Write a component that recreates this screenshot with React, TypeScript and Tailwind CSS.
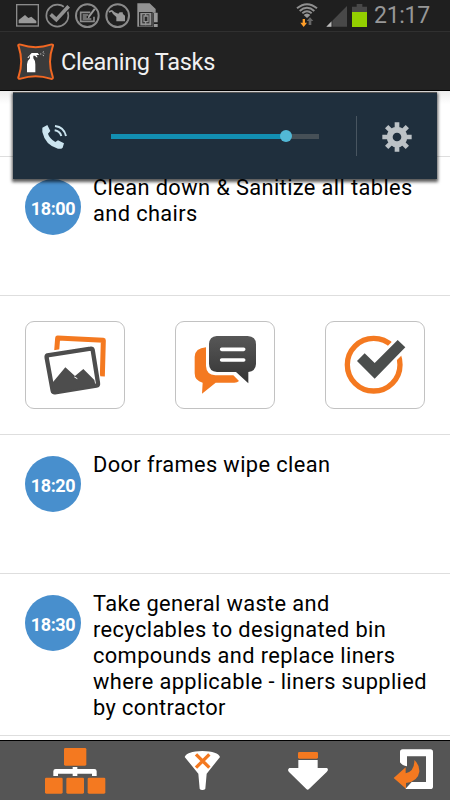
import React from 'react';

const tasks = [
  { time: '18:20', text: 'Door frames wipe clean', size: 'h-[139px] pt-[21px]' },
  { time: '18:30', text: 'Take general waste and recyclables to designated bin compounds and replace liners where applicable - liners supplied by contractor', size: 'h-[162px] pt-[21px]' },
];

function StatusBar() {
  return (
    <div className="flex h-8 shrink-0 items-start border-b border-[#303030] bg-[#1f1f1f] pl-4 pr-[19px] pt-[3px]">
      <div className="flex gap-[7px]">
        <svg className="h-[25px] w-[23px]" viewBox="0 0 69 75" fill="none">
          <rect x="2" y="5" width="65" height="64" stroke="#8a8a8a" strokeWidth="4" />
          <path d="M8 61V51L27 36L37 45L46 41L61 54V61Z" fill="#999" />
        </svg>
        <svg className="-ml-[1px] h-[25px] w-[25px]" viewBox="0 0 75 75" fill="none">
          <circle cx="37" cy="38" r="33" stroke="#8a8a8a" strokeWidth="5" />
          <path d="M17 36L34 51L70 10" stroke="#1f1f1f" strokeWidth="18" />
          <path d="M17 34L34 50L71 10" stroke="#929292" strokeWidth="11" />
        </svg>
        <svg className="-ml-[2px] h-[25px] w-[25px]" viewBox="0 0 75 75" fill="none">
          <circle cx="37" cy="38" r="34" stroke="#8a8a8a" strokeWidth="6" />
          <path d="M46 28H17V55H57V41M23 36H40M23 42H35M23 48H49" stroke="#8a8a8a" strokeWidth="5" />
          <path d="M62 19L44 43L38 47L40 38L57 16Z" fill="#999" />
        </svg>
        <svg className="-ml-[2px] h-[25px] w-[25px]" viewBox="0 0 75 75" fill="none">
          <circle cx="38" cy="38" r="34" stroke="#8a8a8a" strokeWidth="6" />
          <path d="M11 24L21 21L29 28L40 32L44 28H53L54 33L60 38V55H34V42L24 33L20 26L12 29Z" fill="#999" />
        </svg>
        <svg className="h-[25px] w-[21px]" viewBox="0 0 63 75">
          <path d="M1 1H38L56 18V29H49V71H1Z" fill="#929292" />
          <path d="M6 27H47V70H6Z" fill="#2a2a2a" />
          <path d="M10 30H43V67H10Z" fill="#929292" />
          <path d="M16 34H37V61H16Z" fill="#2a2a2a" />
          <path d="M21 39H33V56H21ZM26 30V39M26 56V67" stroke="#929292" strokeWidth="4" fill="none" />
          <path d="M51 29H62V58H51ZM51 63H62V72H51Z" fill="#999" />
        </svg>
      </div>

      <div className="ml-auto flex items-start">
        <svg className="h-[25px] w-[22px]" viewBox="0 0 66 75" fill="none">
          <path d="M3 16Q33 -9 63 16M11 24Q33 5 55 24M19 31Q33 19 47 31" stroke="#8f8f8f" strokeWidth="6" />
          <path d="M23 36Q33 27 43 36L33 45Z" fill="#999" />
          <path d="M20 48H27V59H33L23 72L13 59H20Z" fill="#ff9e29" />
          <path d="M38 66V54H32L42 43L52 54H46V66Z" fill="#666" />
        </svg>
        <svg className="ml-[8px] mt-[3px] h-[21px] w-[21px]" viewBox="0 0 63 63">
          <path d="M63 0V62H1Z" fill="#484848" />
          <path d="M17 46V62H1Z" fill="#bbb" />
          <path d="M18 44V63" stroke="#1f1f1f" strokeWidth="2" />
        </svg>
        <svg className="ml-[5px] mt-px h-[23px] w-[15px]" viewBox="0 0 45 69">
          <path d="M14 0H31V8H45V24H0V8H14Z" fill="#484848" />
          <path d="M0 24H45V69H0Z" fill="#93cf00" />
        </svg>
        <span className="ml-[7px] w-[57px] whitespace-nowrap text-[23px] leading-[25px] tracking-[-0.3px] text-[#979797]">21:17</span>
      </div>
    </div>
  );
}

function TitleBar() {
  return (
    <div className="flex h-[59px] shrink-0 items-center border-b border-black bg-[#222] pl-[17px]">
      <svg className="h-[37px] w-[37px]" viewBox="0 0 111 111">
        <path d="M5 11C2 6 5 3 11 5Q56 20 101 5C107 3 110 6 107 11Q91 56 107 101C109 107 105 109 100 107Q56 92 11 107C5 109 2 105 5 100Q20 56 5 11Z" fill="#3b3b3b" stroke="#f26722" strokeWidth="6" />
        <path d="M35 40L44 30H62L67 36H58L62 43H58L54 38H49V46Q56 54 55 64V88H30V64Q29 55 39 46V37L36 44H31Z" fill="white" />
        <path d="M69 33H73M77 28L81 26M77 36L81 39M80 32H82" stroke="#bbb" strokeWidth="3" />
      </svg>
      <h1 className="ml-[7px] mt-[2px] text-[23.5px] leading-[30px] tracking-[-0.3px] text-[#f1f1f1]">Cleaning Tasks</h1>
    </div>
  );
}

function VolumePanel() {
  return (
    <div className="absolute left-[13px] top-[92px] flex h-[87px] w-[424px] items-center border-t border-[#555] bg-[#1f2f3d] shadow-[0_2px_3px_1px_rgba(0,0,0,0.65)]">
      <svg className="ml-[28px] mt-[2px] h-[26px] w-[26px]" viewBox="0 0 78 78" fill="none">
        <path d="M4 11L19 3L28 21L21 29Q25 43 43 54L51 49L69 58L65 71Q60 76 51 74Q13 64 4 24Z" fill="#cbe4ef" />
        <path d="M41 19Q56 21 61 36M42 6Q69 9 75 36" stroke="#cbe4ef" strokeWidth="6" />
      </svg>
      <div className="relative ml-[44px] h-[5px] w-[208px] bg-[#465057]">
        <div className="h-full w-[175px] bg-[#128fb2]" />
        <div className="absolute left-[169px] top-[-3.5px] h-3 w-3 rounded-full bg-[#52b8d6]" />
      </div>
      <div className="ml-[37px] h-10 w-px bg-[#485560]" />
      <svg className="ml-[25px] mt-px h-[30px] w-[30px]" viewBox="0 0 90 90" fill="none" stroke="#bcc2c6">
        <circle cx="45" cy="45" r="22" strokeWidth="18" />
        <path d="M45 1V18M45 72V89M1 45H18M72 45H89M14 14L26 26M64 64L76 76M14 76L26 64M64 26L76 14" strokeWidth="14" />
      </svg>
    </div>
  );
}

function TaskRow({ time, text, size }: { time: string; text: string; size: string }) {
  return (
    <div className={'flex shrink-0 border-b border-[#dedede] pl-[25px] ' + size}>
      <div className="grid h-14 w-14 shrink-0 place-items-center rounded-full bg-[#488fcd] pt-[2px] text-[18px] font-bold tracking-[-0.4px] text-white">{time}</div>
      <p className="-mt-[4px] ml-3 w-[345px] text-[21.8px] leading-[26.1px] tracking-[0.39px] text-black">{text}</p>
    </div>
  );
}

function ActionButton({ children }: { children: React.ReactNode }) {
  return (
    <button className="grid h-[88px] w-[100px] place-items-center rounded-[9px] border border-[#c2c2c2] bg-white">
      {children}
    </button>
  );
}

function Actions() {
  return (
    <div className="flex h-[139px] shrink-0 gap-[50px] border-b border-[#dedede] pl-[25px] pt-[25px]">
      <ActionButton>
        <svg className="h-[86px] w-[98px]" viewBox="33 37 294 258" fill="none">
          <path d="M125 123L128 85L265 92L262 200" stroke="#f47920" strokeWidth="15" strokeLinejoin="round" />
          <path d="M97 135L227 113Q232 112 233 118L249 221Q250 228 244 229L120 249Q114 250 113 244L95 143Q94 136 97 135Z" fill="white" stroke="white" strokeWidth="20" />
          <path d="M97 137L227 117Q232 116 233 121L249 220Q250 227 244 228L120 248Q114 249 113 243L95 145Q94 138 97 137Z" fill="white" stroke="#4d4d4d" strokeWidth="13" />
          <path d="M111 221L151 173L180 199L205 178L238 211L242 229L117 249Z" fill="#4d4d4d" />
          <path d="M178 202L187 207" stroke="white" strokeWidth="3" />
        </svg>
      </ActionButton>
      <ActionButton>
        <svg className="h-[86px] w-[98px]" viewBox="33 37 294 258" fill="none">
          <defs>
            <linearGradient id="bubble" x1="0" y1="0" x2="0" y2="1">
              <stop stopColor="#575757" />
              <stop offset="1" stopColor="#343434" />
            </linearGradient>
          </defs>
          <path d="M123 113V169Q124 195 151 197H205L222 214Q217 219 208 219H152L111 252L113 219Q89 214 89 191V141Q90 116 123 113Z" fill="#f47920" />
          <path d="M155 79H248Q273 80 273 104V163Q272 184 250 187V221L213 187H156Q132 185 132 162V103Q133 81 155 79Z" fill="url(#bubble)" />
          <path d="M170 119H236M170 151H236" stroke="white" strokeWidth="11" strokeLinecap="round" />
        </svg>
      </ActionButton>
      <ActionButton>
        <svg className="h-[86px] w-[98px]" viewBox="33 37 294 258" fill="none">
          <circle cx="176" cy="165" r="79" stroke="#f47920" strokeWidth="16" />
          <path d="M170 194L180 204L276 108L254 86L202 138" stroke="white" strokeWidth="18" />
          <path d="M126 154L149 131L179 160L248 91L271 113L179 207Z" fill="#4b4e4d" />
        </svg>
      </ActionButton>
    </div>
  );
}

function BottomBar() {
  return (
    <div className="flex h-[60px] shrink-0 border-t border-black bg-[#555]">
      <svg className="ml-[44px] mt-[6px] h-[48px] w-[63px]" viewBox="132 66 189 144">
        <path d="M167 153V139H283V153M225 126V153" stroke="white" strokeWidth="14" strokeLinejoin="round" fill="none" />
        <g fill="#f47920">
          <rect x="192" y="69" width="67" height="53" rx="4" />
          <rect x="135" y="158" width="53" height="48" rx="4" />
          <rect x="199" y="158" width="53" height="48" rx="4" />
          <rect x="263" y="158" width="53" height="48" rx="4" />
        </g>
      </svg>
      <svg className="ml-[77px] mt-[9px] h-[40px] w-[37px]" viewBox="552 75 111 120">
        <path d="M554 96Q560 79 607 78Q654 79 660 96L620 146L616 191Q614 195 607 195Q601 195 599 191L595 146Z" fill="white" />
        <path d="M588 88L628 128M628 88L588 128" stroke="#f47920" strokeWidth="10" />
      </svg>
      <svg className="ml-[66px] mt-[10px] h-[40px] w-[42px]" viewBox="186 78 126 120">
        <rect x="219" y="81" width="60" height="20" rx="4" fill="#f47920" />
        <path d="M220 105H278V129H306Q312 134 305 141L252 192Q248 196 244 192L192 141Q186 134 193 129H220Z" fill="white" />
      </svg>
      <svg className="ml-[64px] mt-[7px] h-[42px] w-[42px]" viewBox="504 69 126 126">
        <path d="M525 81Q525 73 533 73H616Q624 73 624 81V185Q624 192 616 192H541L560 171H603V94H546V124Q532 122 525 112Z" fill="white" />
        <path d="M506 159L542 127V145Q569 139 568 105Q584 119 583 140Q579 169 543 174V191Z" fill="#f47920" />
      </svg>
    </div>
  );
}

function App() {
  return (
    <div className="relative flex h-[800px] w-[450px] flex-col overflow-hidden bg-white font-[Roboto,sans-serif]">
      <StatusBar />
      <TitleBar />
      <div className="flex min-h-0 flex-1 flex-col">
        <div className="h-[66px] shrink-0 border-b border-[#dedede] bg-linear-to-b from-[#ededed] via-white via-20% to-white" />
        <TaskRow time="18:00" text="Clean down & Sanitize all tables and chairs" size="h-[139px] pt-[22px]" />
        <Actions />
        {tasks.map((t) => (
          <TaskRow key={t.time} time={t.time} text={t.text} size={t.size} />
        ))}
      </div>
      <BottomBar />
      <VolumePanel />
    </div>
  );
}

export default App;
